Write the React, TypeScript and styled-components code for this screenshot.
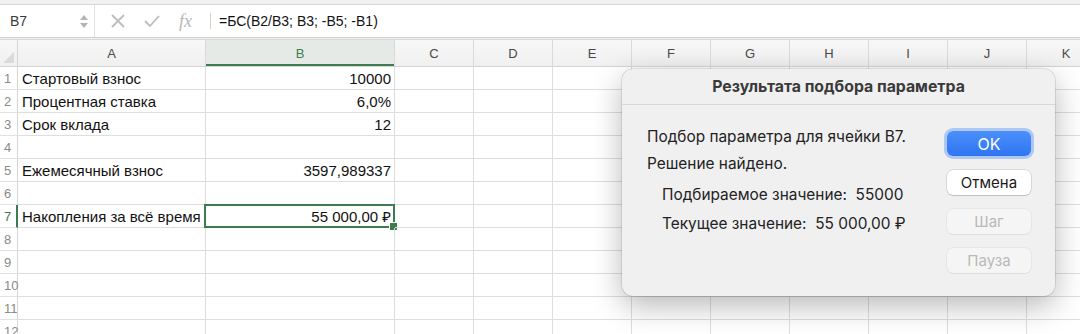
import React from "react";
import styled, { createGlobalStyle } from "styled-components";

const GlobalStyle = createGlobalStyle`
  html, body { margin: 0; padding: 0; background: #fff; }
  body { font-family: "Liberation Sans", "Noto Sans", sans-serif; overflow: hidden; }
  * { box-sizing: border-box; }
`;

const green = "#3e7c4f";
const cols = [
  { key: "A", w: 188 },
  { key: "B", w: 189 },
  { key: "C", w: 79 },
  { key: "D", w: 79 },
  { key: "E", w: 79 },
  { key: "F", w: 79 },
  { key: "G", w: 79 },
  { key: "H", w: 79 },
  { key: "I", w: 79 },
  { key: "J", w: 79 },
  { key: "K", w: 79 },
];
const gridCols = `18px ${cols.map(c => c.w + "px").join(" ")}`;

const rows: Record<number, { a?: string; b?: string }> = {
  1: { a: "Стартовый взнос", b: "10000" },
  2: { a: "Процентная ставка", b: "6,0%" },
  3: { a: "Срок вклада", b: "12" },
  5: { a: "Ежемесячный взнос", b: "3597,989337" },
  7: { a: "Накопления за всё время", b: "55 000,00 ₽" },
};

const Page = styled.div`
  position: relative;
  width: 1080px; height: 334px; overflow: hidden;
  background: #fff;
`;

const TopStrip = styled.div`
  height: 5px; background: #f1f1f1; border-bottom: 1px solid #d6d6d6;
`;

const FormulaBar = styled.div`
  height: 33px; display: flex; align-items: center;
  border-bottom: 1px solid #cfcfcf; background: #fff;
`;

const NameBox = styled.div`
  width: 95px; height: 100%; display: flex; align-items: center; justify-content: space-between;
  padding: 0 6px 0 10px; border-right: 1px solid #e0e0e0;
  font-size: 14px; color: #3a3a3a;
`;

const Spinner = styled.div`
  display: flex; flex-direction: column; gap: 3px;
`;

const Arrow = styled.div<{ $down?: boolean }>`
  width: 0; height: 0;
  border-left: 4px solid transparent; border-right: 4px solid transparent;
  ${p => p.$down ? "border-top: 5px solid #b5b5b5;" : "border-bottom: 5px solid #b5b5b5;"}
`;

const Tools = styled.div`
  display: flex; align-items: center; gap: 19px; padding-left: 16px; width: 115px;
`;

const FxText = styled.span`
  font-family: "Liberation Serif", serif; font-style: italic; font-size: 18px; color: #b8b8b8;
`;

const Divider = styled.div`
  width: 1px; height: 16px; background: #d2d2d2; margin-right: 8px;
`;

const Formula = styled.div`
  font-size: 14px; color: #111;
`;

const Gap = styled.div`
  height: 2px; background: #f3f3f3; border-bottom: 1px solid #d9d9d9;
`;

const Grid = styled.div`
  display: grid; grid-template-columns: ${gridCols};
  grid-auto-rows: 23px;
`;

const HeadRow = styled.div`
  display: grid; grid-template-columns: ${gridCols}; height: 27px;
  background: linear-gradient(#f7f7f7, #f0f0f0);
  border-bottom: 1px solid #d4d4d4;
`;

const Corner = styled.div`
  position: relative; border-right: 1px solid #d6d6d6; overflow: hidden;
  &::after {
    content: ""; position: absolute; right: 3px; bottom: 3px;
    border-left: 11px solid transparent; border-bottom: 11px solid #dadada;
  }
`;

const ColHead = styled.div<{ $active?: boolean }>`
  display: flex; align-items: center; justify-content: center;
  font-size: 13px; color: ${p => p.$active ? green : "#4a4a4a"};
  border-right: 1px solid #dadada;
  ${p => p.$active && `background: #e6eae6; box-shadow: inset 0 -2px 0 ${green};`}
`;

const RowHead = styled.div<{ $active?: boolean }>`
  display: flex; align-items: center; padding-left: 4px;
  font-size: 13px; color: ${p => p.$active ? green : "#8a8a8a"};
  border-bottom: 1px solid #e2e2e2;
  border-right: ${p => p.$active ? `2px solid ${green}` : "1px solid #d6d6d6"};
`;

const Cell = styled.div<{ $right?: boolean; $overflow?: boolean }>`
  position: relative;
  display: flex; align-items: center;
  justify-content: ${p => p.$right ? "flex-end" : "flex-start"};
  padding: 0 3px 0 4px;
  font-size: 15px; color: #111; white-space: nowrap;
  overflow: ${p => p.$overflow ? "visible" : "hidden"};
  border-right: 1px solid #dedede; border-bottom: 1px solid #dedede;
`;

const Selection = styled.div`
  position: absolute; inset: -1px -1px -1px -2px;
  border: 2px solid ${green}; pointer-events: none;
  &::after {
    content: ""; position: absolute; right: -5px; bottom: -5px;
    width: 7px; height: 7px; background: ${green}; border: 1px solid #fff;
  }
`;

const Dialog = styled.div`
  position: absolute; left: 622px; top: 69px; width: 433px; height: 227px;
  background: #f0f0f0; border-radius: 11px;
  box-shadow: 0 0 0 0.5px rgba(0,0,0,0.18), 0 10px 30px rgba(0,0,0,0.28);
  font-family: "Inter", "Liberation Sans", sans-serif;
  display: flex; flex-direction: column;
`;

const DialogTitle = styled.div`
  height: 36px; display: flex; align-items: center; justify-content: center;
  font-size: 15.8px; font-weight: 700; color: #3a3a3a;
  border-bottom: 1px solid #d8d8d8;
`;

const DialogBody = styled.div`
  display: flex; justify-content: space-between; padding: 0 24px 0 25px;
`;

const Messages = styled.div`
  display: flex; flex-direction: column; padding-top: 22px; font-size: 15.4px; color: #222;
`;

const Line = styled.div<{ $indent?: boolean; $top: number }>`
  height: 20px; line-height: 20px; margin-top: ${p => p.$top}px;
  padding-left: ${p => p.$indent ? 15 : 0}px; white-space: pre;
`;

const Buttons = styled.div`
  display: flex; flex-direction: column; gap: 14px; padding-top: 26px;
`;

const Button = styled.button<{ $kind?: "primary" | "disabled" }>`
  width: 84px; height: 25px; border-radius: 6px; border: none;
  font-family: inherit; font-size: 15px; cursor: default;
  ${p => p.$kind === "primary"
    ? `background: linear-gradient(#4a90fb, #2f74f2); color: #fff; font-size: 16px;
       box-shadow: 0 0 0 3px rgba(120,165,245,0.55);`
    : p.$kind === "disabled"
    ? `background: #f5f5f5; color: #b9b9b9; box-shadow: 0 0 0 0.5px rgba(0,0,0,0.08), 0 1px 1px rgba(0,0,0,0.04);`
    : `background: #fff; color: #1a1a1a; box-shadow: 0 0 0 0.5px rgba(0,0,0,0.18), 0 1px 1px rgba(0,0,0,0.12);`}
`;

const XIcon = () => (
  <svg width="14" height="14" viewBox="0 0 14 14">
    <path d="M1 1 L13 13 M13 1 L1 13" stroke="#bdbdbd" strokeWidth="1.8" fill="none" />
  </svg>
);

const CheckIcon = () => (
  <svg width="16" height="14" viewBox="0 0 16 14">
    <path d="M1 7 L6 12 L15 2" stroke="#bdbdbd" strokeWidth="1.8" fill="none" />
  </svg>
);

export default function App() {
  const rowNums = Array.from({ length: 12 }, (_, i) => i + 1);
  return (
    <Page>
      <GlobalStyle />
      <TopStrip />
      <FormulaBar>
        <NameBox>
          B7
          <Spinner>
            <Arrow />
            <Arrow $down />
          </Spinner>
        </NameBox>
        <Tools>
          <XIcon />
          <CheckIcon />
          <FxText>fx</FxText>
        </Tools>
        <Divider />
        <Formula>=БС(B2/B3; B3; -B5; -B1)</Formula>
      </FormulaBar>
      <Gap />
      <HeadRow>
        <Corner />
        {cols.map(c => (
          <ColHead key={c.key} $active={c.key === "B"}>{c.key}</ColHead>
        ))}
      </HeadRow>
      <Grid>
        {rowNums.map(r => (
          <React.Fragment key={r}>
            <RowHead $active={r === 7}>{r}</RowHead>
            {cols.map(c => {
              const data = rows[r];
              if (c.key === "A") return <Cell key={c.key} $overflow>{data?.a}</Cell>;
              if (c.key === "B")
                return (
                  <Cell key={c.key} $right $overflow={r === 7}>
                    {data?.b}
                    {r === 7 && <Selection />}
                  </Cell>
                );
              return <Cell key={c.key} />;
            })}
          </React.Fragment>
        ))}
      </Grid>
      <Dialog>
        <DialogTitle>Результата подбора параметра</DialogTitle>
        <DialogBody>
          <Messages>
            <Line $top={0}>Подбор параметра для ячейки B7.</Line>
            <Line $top={7}>Решение найдено.</Line>
            <Line $top={11} $indent>Подбираемое значение:  55000</Line>
            <Line $top={9} $indent>Текущее значение:  55 000,00 ₽</Line>
          </Messages>
          <Buttons>
            <Button $kind="primary">OK</Button>
            <Button>Отмена</Button>
            <Button $kind="disabled">Шаг</Button>
            <Button $kind="disabled">Пауза</Button>
          </Buttons>
        </DialogBody>
      </Dialog>
    </Page>
  );
}
